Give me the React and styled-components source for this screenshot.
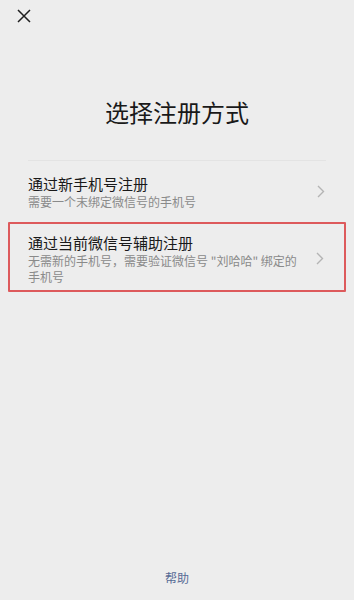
import React from 'react';
import styled, { createGlobalStyle } from 'styled-components';

const GlobalStyle = createGlobalStyle`
  html, body {
    margin: 0;
    padding: 0;
    background: #ededed;
  }
  body {
    font-family: 'Noto Sans CJK SC', 'Noto Sans', sans-serif;
    color: #191919;
  }
`;

const Page = styled.div`
  height: 600px;
  display: flex;
  flex-direction: column;
  background: #ededed;
`;

const TopBar = styled.div`
  height: 32px;
  padding-left: 17px;
  display: flex;
  align-items: flex-start;
`;

const CloseButton = styled.button`
  margin-top: 9px;
  width: 14px;
  height: 14px;
  padding: 0;
  border: none;
  background: none;
  display: flex;
  cursor: pointer;
`;

const Title = styled.h1`
  margin: 64px 0 0;
  font-size: 24px;
  line-height: 32px;
  font-weight: 400;
  text-align: center;
  color: #191919;
`;

const List = styled.div`
  margin-top: 32px;
  display: flex;
  flex-direction: column;
`;

const Divider = styled.div`
  height: 1px;
  margin: 0 28px;
  background: #e3e3e3;
`;

const Item = styled.div`
  display: flex;
  align-items: center;
  padding: ${(p) => (p.$highlight ? '8px 20px 5px 18px' : '12px 29px 10px 28px')};
  margin: ${(p) => (p.$highlight ? '2px 8px 0 8px' : '0')};
  border: ${(p) => (p.$highlight ? '2px solid #dd5a5c' : 'none')};
  border-radius: 1px;
  cursor: pointer;
`;

const ItemText = styled.div`
  flex: 1;
  min-width: 0;
  padding-right: 14px;
`;

const ItemTitle = styled.div`
  font-size: 15px;
  line-height: 21px;
  color: #191919;
`;

const ItemSub = styled.div`
  font-size: 12px;
  line-height: 16px;
  color: #8a8a8a;
`;

const Help = styled.div`
  margin-top: auto;
  padding-bottom: 13px;
  text-align: center;
  font-size: 12px;
  line-height: 18px;
  color: #576b95;
`;

const CloseIcon = () => (
  <svg width="14" height="14" viewBox="0 0 14 14">
    <path d="M1 1 L13 13 M13 1 L1 13" stroke="#1f1f1f" strokeWidth="1.5" fill="none" />
  </svg>
);

const Chevron = () => (
  <svg width="8" height="13" viewBox="0 0 8 13">
    <path d="M1 1 L6.5 6.5 L1 12" stroke="#b4b4b4" strokeWidth="1.4" fill="none" />
  </svg>
);

const options = [
  { title: '通过新手机号注册', sub: '需要一个末绑定微信号的手机号' },
  {
    title: '通过当前微信号辅助注册',
    sub: '无需新的手机号，需要验证微信号 "刘哈哈" 绑定的手机号',
    highlight: true,
  },
];

export default function App() {
  return (
    <>
      <GlobalStyle />
      <Page>
        <TopBar>
          <CloseButton aria-label="关闭">
            <CloseIcon />
          </CloseButton>
        </TopBar>
        <Title>选择注册方式</Title>
        <List>
          <Divider />
          {options.map((o) => (
            <Item key={o.title} $highlight={o.highlight}>
              <ItemText>
                <ItemTitle>{o.title}</ItemTitle>
                <ItemSub>{o.sub}</ItemSub>
              </ItemText>
              <Chevron />
            </Item>
          ))}
        </List>
        <Help>帮助</Help>
      </Page>
    </>
  );
}
